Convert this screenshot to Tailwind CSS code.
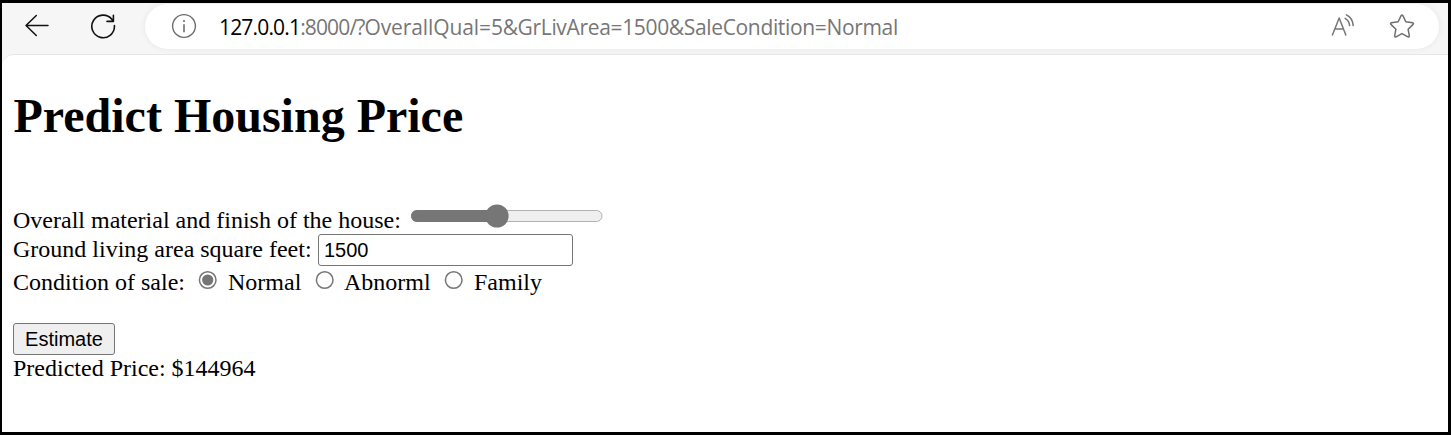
<!DOCTYPE html>
<html lang="en">
<head>
<meta charset="utf-8">
<title>Predict Housing Price</title>
<script src="https://cdn.jsdelivr.net/npm/@tailwindcss/browser@4"></script>
</head>
<body class="h-[435px] w-[1451px] overflow-hidden bg-black pt-[3px] pr-[3px] pb-[3px] pl-[2px]">
<div class="flex h-[429px] flex-col bg-[#f6f6f6]">
  <header class="flex h-[51px] shrink-0 items-start">
    <svg class="ml-[22px] mt-[10px] h-[26px] w-[26px] shrink-0" viewBox="0 0 26 26" fill="none" stroke="#111" stroke-width="1.5" stroke-linecap="round" stroke-linejoin="round"><path d="M24 12.5H2M12.3 2.5L2 12.5L12.3 22.5"/></svg>
    <svg class="ml-[40px] mt-[10px] h-[28px] w-[28px] shrink-0" viewBox="0 0 28 28" fill="none" stroke="#111" stroke-width="1.6" stroke-linecap="round" stroke-linejoin="round"><path d="M24.4 12.5A11.3 11.3 0 1 1 22 6.4L23.4 8.2M23.4 2.2V8.4H17"/></svg>
    <div class="ml-[27px] mt-px flex h-[45px] w-[1294px] shrink-0 items-center rounded-full bg-white shadow-[0_0_6px_rgba(0,0,0,0.07)]">
      <svg class="ml-[26px] mb-px h-[26px] w-[26px] shrink-0" viewBox="0 0 26 26" fill="none" stroke="#6e6e6e" stroke-width="1.4"><circle cx="13" cy="13" r="11.4"/><path d="M13 11.3V19.2" stroke-width="1.6"/><circle cx="13" cy="8" r="1.1" fill="#6e6e6e" stroke="none"/></svg>
      <div class="ml-[22px] w-[690px] whitespace-nowrap font-['Open_Sans',sans-serif] text-[21px] leading-[30px] tracking-[-0.34px] text-[#767676]"><span class="tracking-[-0.83px] text-black">127.0.0.1</span><span class="tracking-[-0.85px]">:8000/?</span><span class="tracking-[-0.1px]">OverallQual=</span>5&amp;GrLivArea=1500&amp;SaleCondition=Normal</div>
      <svg class="ml-auto mb-px h-[26px] w-[26px] shrink-0" viewBox="0 0 26 26" fill="none" stroke="#767676" stroke-width="1.5" stroke-linecap="round" stroke-linejoin="round"><path d="M2.4 22L9.2 5L15.8 22M4.8 16H13.5M15.2 5.4Q19.2 7.6 19.6 12.6M16.4 1.9Q22.6 4.8 23.2 12.6"/></svg>
      <svg class="ml-[33px] mr-[24px] mb-px h-[26px] w-[26px] shrink-0" viewBox="0 0 26 26" fill="none" stroke="#6e6e6e" stroke-width="1.5" stroke-linejoin="round"><path d="M12.1 2.6Q13 1.2 13.9 2.6L16.8 8.8L23.6 9.8Q25 10.2 24.1 11.4L19.1 16.2L20.3 22.7Q20.3 24.4 18.9 23.8L13 20.6L7.1 23.8Q5.7 24.4 5.7 22.7L6.9 16.2L1.9 11.4Q1 10.2 2.4 9.8L9.2 8.8Z"/></svg>
    </div>
  </header>
  <main class="flex-1 rounded-tl-[12px] border-t border-[#e6e6e6] bg-white pl-[11px] font-['Liberation_Serif',serif] text-[24px] leading-[28px] text-black">
    <h1 class="mt-[33px] ml-[0.5px] h-[56px] text-[48px] leading-[56px] font-bold">Predict Housing Price</h1>
    <div class="mt-[62px] flex h-[28px] whitespace-nowrap">
      <span class="w-[398px]">Overall material and finish of the house:</span>
      <svg class="-mt-[2px] h-[24px] w-[192px]" viewBox="0 0 192 24"><rect x=".5" y="6.5" width="190.5" height="11" rx="5.5" fill="#efefef" stroke="#b2b2b2"/><path d="M6 6H86V18H6A6 6 0 0 1 6 6Z" fill="#767676"/><circle cx="86" cy="12" r="11.6" fill="#767676"/></svg>
    </div>
    <div class="flex h-[32px] whitespace-nowrap">
      <span class="mt-px w-[305px]">Ground living area square feet:</span>
      <input class="h-[32px] w-[255px] rounded-[3px] border border-[#767676] bg-white px-[5px] font-['Liberation_Sans',sans-serif] text-[20px] leading-[28px]" value="1500">
    </div>
    <div class="mt-[2px] flex h-[28px] whitespace-nowrap">
      <span class="w-[185px]">Condition of sale:</span>
      <svg class="mt-[2px] h-[20px] w-[20px]" viewBox="0 0 20 20"><circle cx="9.7" cy="10" r="8.3" fill="white" stroke="#767676" stroke-width="1.5"/><circle cx="9.7" cy="10" r="5.6" fill="#767676"/></svg>
      <span class="ml-[10px] w-[87px]">Normal</span>
      <svg class="mt-[2px] h-[20px] w-[20px]" viewBox="0 0 20 20"><circle cx="9.7" cy="10" r="8.3" fill="white" stroke="#767676" stroke-width="1.5"/></svg>
      <span class="ml-[9px] w-[100px]">Abnorml</span>
      <svg class="mt-[2px] h-[20px] w-[20px]" viewBox="0 0 20 20"><circle cx="9.7" cy="10" r="8.3" fill="white" stroke="#767676" stroke-width="1.5"/></svg>
      <span class="ml-[10px]">Family</span>
    </div>
    <button class="mt-[27px] block h-[32px] w-[102px] rounded-[3px] border border-[#767676] bg-[#efefef] font-['Liberation_Sans',sans-serif] text-[20px] leading-[28px]">Estimate</button>
    <p class="-mt-px">Predicted Price: $144964</p>
  </main>
</div>
</body>
</html>
